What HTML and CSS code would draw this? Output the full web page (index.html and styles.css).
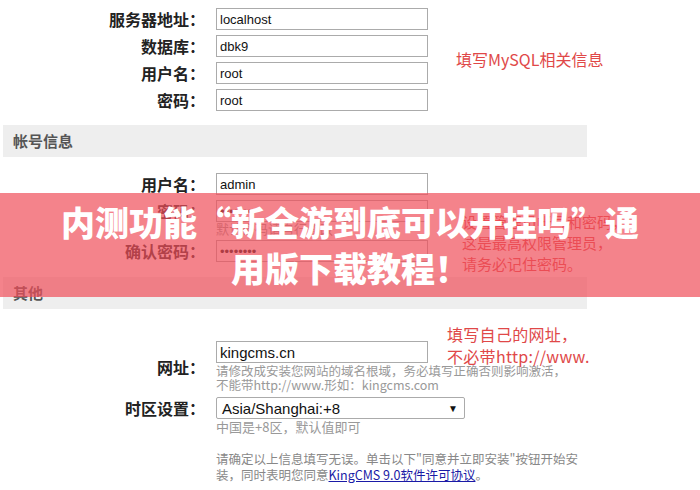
FILE: index.html
```html
<!DOCTYPE html>
<html lang="zh-CN">
<head>
  <meta charset="UTF-8">
  <title>KingCMS 安装</title>
  <link rel="stylesheet" href="styles.css">
</head>
<body>

  <div class="pagina">

    <div class="grupo grupo-mysql">
      <div class="campos">
        <div class="linha">
          <label class="rotulo">服务器地址：</label>
          <input class="caixa" type="text" value="localhost">
        </div>
        <div class="linha">
          <label class="rotulo">数据库：</label>
          <input class="caixa" type="text" value="dbk9">
        </div>
        <div class="linha">
          <label class="rotulo">用户名：</label>
          <input class="caixa" type="text" value="root">
        </div>
        <div class="linha">
          <label class="rotulo">密码：</label>
          <input class="caixa" type="text" value="root">
        </div>
      </div>
      <div class="nota nota-mysql">填写MySQL相关信息</div>
    </div>

    <div class="secao">帐号信息</div>

    <div class="grupo grupo-conta">
      <div class="campos">
        <div class="linha">
          <label class="rotulo">用户名：</label>
          <input class="caixa" type="text" value="admin">
        </div>
        <div class="linha linha-topo">
          <label class="rotulo">密码：</label>
          <div class="coluna">
            <input class="caixa" type="password" value="admin123">
            <div class="dica dica-senha">默认密码请自行修改</div>
          </div>
        </div>
        <div class="linha">
          <label class="rotulo">确认密码：</label>
          <input class="caixa" type="password" value="admin123">
        </div>
      </div>
      <div class="nota nota-conta">设置管理员帐号和密码，<br>这是最高权限管理员，<br>请务必记住密码。</div>
    </div>

    <div class="secao">其他</div>

    <div class="grupo grupo-outros">
      <div class="campos">
        <div class="linha">
          <label class="rotulo">网址：</label>
          <div class="coluna">
            <input class="caixa caixa-grande" type="text" value="kingcms.cn">
            <div class="dica dica-larga">请修改成安装您网站的域名根域，务必填写正确否则影响激活，<br>不能带http://www.形如：kingcms.com</div>
          </div>
        </div>
        <div class="linha linha-topo">
          <label class="rotulo">时区设置：</label>
          <div class="coluna">
            <div class="seletor"><span>Asia/Shanghai:+8</span><span class="seta">&#9660;</span></div>
            <div class="dica">中国是+8区，默认值即可</div>
          </div>
        </div>
      </div>
      <div class="nota nota-outros">填写自己的网址，<br>不必带http://www.</div>
    </div>

    <p class="aviso">请确定以上信息填写无误。单击以下"同意并立即安装"按钮开始安装，同时表明您同意<a href="#">KingCMS 9.0软件许可协议</a>。</p>

  </div>

  <!-- faixa do titulo por cima do formulario -->
  <div class="faixa">
    <h1 class="titulo">内测功能“新全游到底可以开挂吗”通用版下载教程！</h1>
  </div>

</body>
</html>
```

FILE: styles.css
```css
body {
  margin: 0;
  background: #fff;
  font-family: "Liberation Sans", "Noto Sans CJK SC", sans-serif;
  position: relative;
  width: 700px;
  height: 490px;
  overflow: hidden;
}

.pagina {
  padding-top: 8px;
}

.grupo {
  display: flex;
  align-items: flex-start;
}

.campos {
  display: flex;
  flex-direction: column;
  gap: 5px;
  flex-shrink: 0;
}

.linha {
  display: flex;
  align-items: center;
  gap: 11px;
}

.linha-topo {
  align-items: flex-start;
}

.rotulo {
  width: 205px;
  flex-shrink: 0;
  text-align: right;
  font-family: "Noto Sans CJK SC", sans-serif;
  font-weight: bold;
  font-size: 16px;
  line-height: 22px;
  color: #222;
}

.coluna {
  display: flex;
  flex-direction: column;
}

.caixa {
  box-sizing: border-box;
  width: 212px;
  height: 22px;
  margin: 0;
  padding: 0 3px;
  border: 1px solid #ababab;
  font-family: "Liberation Sans", sans-serif;
  font-size: 13px;
  color: #111;
}

.caixa-grande {
  font-size: 15px;
}

.dica {
  font-family: "Noto Sans CJK SC", sans-serif;
  font-size: 13px;
  line-height: 14px;
  color: #999;
  margin-top: 1px;
  white-space: nowrap;
}

.dica-senha {
  margin-top: 0;
  line-height: 13px;
}

.dica-larga {
  font-size: 12.5px;
}

.seletor {
  box-sizing: border-box;
  width: 249px;
  height: 22px;
  border: 1px solid #ababab;
  border-radius: 2px;
  display: flex;
  justify-content: space-between;
  align-items: center;
  padding: 0 6px 0 5px;
  font-family: "Liberation Sans", sans-serif;
  font-size: 15px;
  color: #111;
}

.seletor .seta {
  font-size: 10px;
}

.nota {
  font-family: "Noto Sans CJK SC", sans-serif;
  font-size: 16px;
  line-height: 21px;
  color: #e04848;
  white-space: nowrap;
}

.nota-mysql {
  align-self: center;
  margin-left: 28px;
}

.nota-conta {
  margin-left: 34px;
  margin-top: 38px;
  margin-bottom: -30px;
  font-size: 15px;
}

.nota-outros {
  margin-left: 19px;
  line-height: 22px;
  letter-spacing: 0.3px;
}

.grupo-mysql {
  margin-bottom: 14px;
}

.grupo-conta {
  margin-top: 16px;
  margin-bottom: 15px;
}

.grupo-outros {
  margin-top: 14px;
}

.grupo-outros .campos {
  width: 428px;
  padding-top: 18px;
}

.secao {
  margin-left: 3px;
  width: 584px;
  height: 32px;
  line-height: 32px;
  background: #eee;
  padding-left: 10px;
  box-sizing: border-box;
  font-family: "Noto Sans CJK SC", sans-serif;
  font-weight: bold;
  font-size: 15px;
  color: #555;
}

.aviso {
  margin: 17px 0 0 216px;
  width: 372px;
  font-family: "Noto Sans CJK SC", sans-serif;
  font-size: 12.5px;
  line-height: 16px;
  color: #888;
}

.aviso a {
  color: #1a1aa6;
}

.faixa {
  position: absolute;
  left: 0;
  right: 0;
  top: 193px;
  height: 104px;
  background: rgba(240, 78, 90, 0.7);
  display: flex;
  align-items: center;
  justify-content: center;
}

.titulo {
  margin: 0;
  width: 590px;
  text-align: center;
  font-family: "Noto Sans CJK SC", sans-serif;
  font-weight: 900;
  font-size: 34px;
  line-height: 46px;
  color: #fff;
}
```
